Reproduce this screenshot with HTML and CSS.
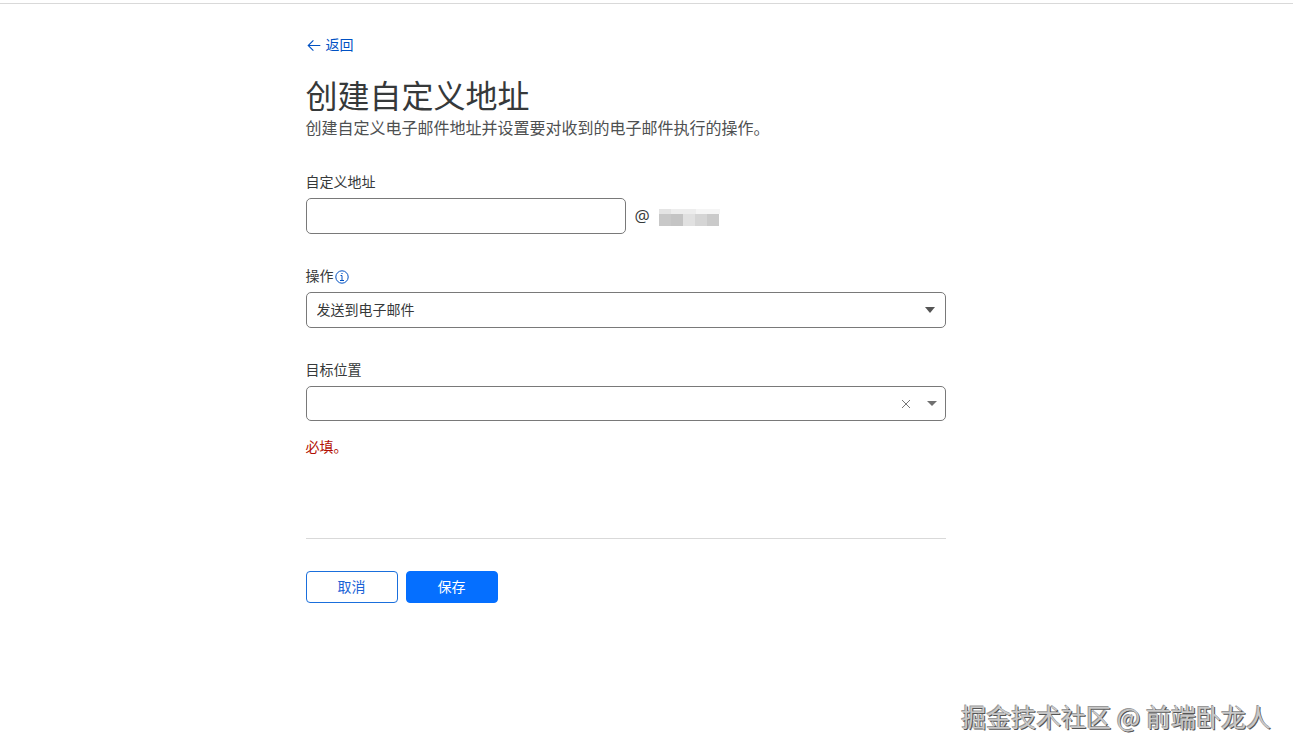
FILE: index.html
```html
<!DOCTYPE html>
<html lang="zh-CN">
<head>
<meta charset="utf-8">
<title>创建自定义地址</title>
<link rel="stylesheet" href="styles.css">
</head>
<body>
<header class="topbar"></header>
<main class="page">
  <div class="content">
    <a class="back" href="#">
      <svg width="14" height="14" viewBox="0 0 14 14" fill="none" stroke="currentColor" stroke-width="1.1" aria-hidden="true"><path d="M13.3 7.5H1.2M6.4 2.3L1.2 7.5l5.2 5.2"/></svg>
      <span>返回</span>
    </a>
    <h1 class="title">创建自定义地址</h1>
    <p class="intro">创建自定义电子邮件地址并设置要对收到的电子邮件执行的操作。</p>
    <form class="form">
      <div class="field">
        <label class="label" for="address">自定义地址</label>
        <div class="address-row">
          <input class="control address" id="address" type="text">
          <span class="at">@</span>
          <svg class="domain" width="61" height="18" viewBox="0 0 61 18" shape-rendering="crispEdges" aria-hidden="true">
            <path fill="#e4e4e4" d="M0 0h12v5H0z"/><path fill="#ededed" d="M12 0h25v5H12z"/><path fill="#f5f5f5" d="M37 0h24v5H37z"/>
            <path fill="#c8c8c8" d="M0 5h12v12H0z"/><path fill="#c4c4c4" d="M12 5h12v12H12z"/><path fill="#e1e1e1" d="M24 5h12v12H24z"/><path fill="#d5d5d5" d="M36 5h12v12H36z"/><path fill="#cacaca" d="M48 5h12v12H48z"/>
          </svg>
        </div>
      </div>
      <div class="field">
        <div class="label-row">
          <label class="label" for="action">操作</label>
          <svg class="info" width="16" height="16" viewBox="0 0 16 16" fill="none" stroke="currentColor" aria-hidden="true"><circle cx="8" cy="9" r="6.2"/><path d="M6.5 7.5H8v5M6 12.5h4M7.4 5.5h1.2"/></svg>
        </div>
        <div class="picker">
          <select class="control" id="action"><option>发送到电子邮件</option></select>
          <svg class="caret" width="10" height="6" viewBox="0 0 10 6" aria-hidden="true"><path fill="#555" d="M0 0h10L5 6z"/></svg>
        </div>
      </div>
      <div class="field">
        <label class="label" for="target">目标位置</label>
        <div class="control combo">
          <input class="combo-input" id="target" type="text">
          <button class="clear" type="button" aria-label="清除"><svg width="10" height="10" viewBox="0 0 10 10" stroke="#777" aria-hidden="true"><path d="M1 1l8 8M9 1L1 9"/></svg></button>
          <svg width="10" height="5" viewBox="0 0 10 5" aria-hidden="true"><path fill="#707070" d="M0 0h10L5 5z"/></svg>
        </div>
        <p class="error">必填。</p>
      </div>
      <div class="actions">
        <button class="btn secondary" type="button">取消</button>
        <button class="btn primary" type="submit">保存</button>
      </div>
    </form>
  </div>
</main>
<footer class="watermark">掘金技术社区 @ 前端卧龙人</footer>
</body>
</html>
```
FILE: styles.css
```css
* { box-sizing: border-box; }
body {
  margin: 0;
  min-height: 100vh;
  display: flex;
  flex-direction: column;
  background: #fff;
  color: #36393a;
  font: 14px/20px "Open Sans", "Noto Sans CJK SC", sans-serif;
}
input, select, button { font: inherit; color: inherit; }
.topbar { height: 4px; border-bottom: 1px solid #d9d9d9; }
.page { flex: 1; padding: 31px 42px 32px 0; }
.content { max-width: 640px; margin: 0 auto; }
.back {
  display: inline-flex;
  align-items: center;
  gap: 5px;
  padding-left: 1px;
  color: #0051c3;
  text-decoration: none;
}
.title { margin: 17px 0 0; font-size: 32px; line-height: 40px; font-weight: 400; font-family: "Noto Sans CJK SC", sans-serif; }
.intro { margin: 0; font-size: 16px; line-height: 28px; color: #4e5051; }
.form { margin-top: 30px; }
.field { margin-bottom: 32px; }
.label { display: block; }
.label-row { display: flex; align-items: center; }
.info { color: #0051c3; }
.label + .control, .address-row, .picker { margin-top: 6px; }
.control {
  display: block;
  width: 100%;
  height: 36px;
  padding: 0 10px;
  border: 1px solid #797979;
  border-radius: 5px;
  background: #fff;
  appearance: none;
}
.address-row { display: flex; align-items: center; gap: 9px; }
.address { width: 50%; }
.at { font-size: 17px; }
.domain { margin-top: 3px; }
.picker { display: grid; align-items: center; }
.picker > * { grid-area: 1 / 1; }
.caret { justify-self: end; margin-right: 11px; pointer-events: none; }
.combo { display: flex; align-items: center; height: 35px; padding: 0 8px; }
.combo-input { flex: 1; min-width: 0; border: 0; outline: 0; background: none; }
.clear { display: flex; margin-right: 16px; padding: 0; border: 0; background: none; }
.error { margin: 16px 0 0; color: #b20f03; }
.actions {
  display: flex;
  gap: 8px;
  margin-top: 81px;
  padding-top: 32px;
  border-top: 1px solid #d9d9d9;
}
.btn { width: 92px; height: 32px; padding: 0; border: 1px solid #056fff; border-radius: 4px; }
.secondary { border-color: #1a6fdc; background: #fff; color: #1a62d6; }
.primary { background: #056fff; color: #fff; }
.watermark {
  padding: 0 22px 19px 0;
  text-align: right;
  font-size: 25px;
  line-height: 36px;
  font-family: "Noto Sans CJK SC", sans-serif;
  color: #c8c8c8;
  text-shadow: 1px 1px 0 #555, -1px -1px 0 #999;
}
```
